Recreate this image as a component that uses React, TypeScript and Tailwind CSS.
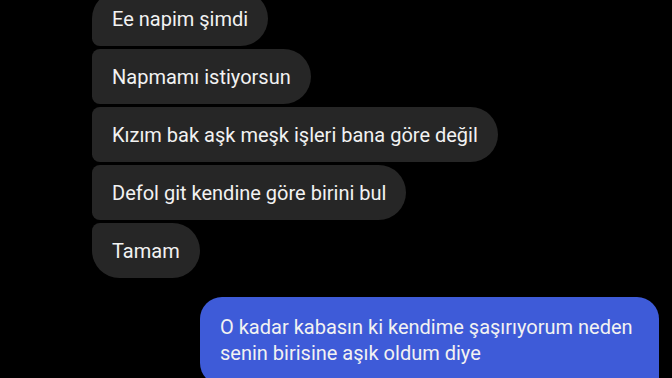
import React from 'react';

export default function App() {
  const received = [
    "Ee napim şimdi",
    "Napmamı istiyorsun",
    "Kızım bak aşk meşk işleri bana göre değil",
    "Defol git kendine göre birini bul",
    "Tamam",
  ];

  return (
    <div className="w-[672px] h-[378px] bg-black overflow-hidden flex flex-col font-['Roboto',sans-serif] text-[#f2f2f2]">
      <div className="flex flex-col items-start gap-[3px] pl-[92px] mt-[-9px]">
        {received.map((msg, i) => (
          <div
            key={i}
            className={
              "h-[55px] px-5 flex items-center text-[20px] bg-[#262626] rounded-r-[28px] rounded-l-[8px] " +
              (i === 0 ? "rounded-tl-[28px] " : "") +
              (i === received.length - 1 ? "rounded-bl-[28px]" : "")
            }
          >
            {msg}
          </div>
        ))}
      </div>
      <div className="flex justify-end pr-[13px] mt-[19px]">
        <div className="w-[459px] h-[88px] shrink-0 bg-[#3e5bd8] rounded-[22px] rounded-br-[6px] px-5 pt-[17px] text-[20px] leading-[26px]">
          O kadar kabasın ki kendime şaşırıyorum neden senin birisine aşık oldum diye
        </div>
      </div>
    </div>
  );
}
